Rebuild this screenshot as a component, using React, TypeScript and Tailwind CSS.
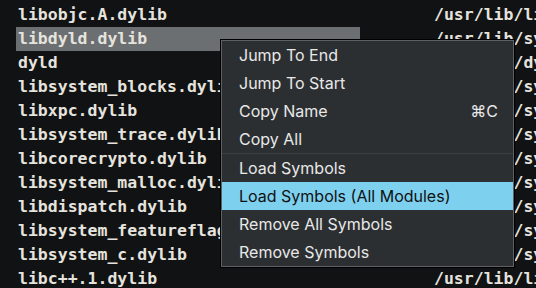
const rows: [string, string][] = [
  ["libobjc.A.dylib", "/usr/lib/libobjc.A.dylib"],
  ["libdyld.dylib", "/usr/lib/system/libdyld.dylib"],
  ["dyld", "/usr/lib/dyld"],
  ["libsystem_blocks.dylib", "/usr/lib/system/libsystem_blocks.dylib"],
  ["libxpc.dylib", "/usr/lib/system/libxpc.dylib"],
  ["libsystem_trace.dylib", "/usr/lib/system/libsystem_trace.dylib"],
  ["libcorecrypto.dylib", "/usr/lib/system/libcorecrypto.dylib"],
  ["libsystem_malloc.dylib", "/usr/lib/system/libsystem_malloc.dylib"],
  ["libdispatch.dylib", "/usr/lib/system/libdispatch.dylib"],
  ["libsystem_featureflags.dylib", "/usr/lib/system/libsystem_featureflags.dylib"],
  ["libsystem_c.dylib", "/usr/lib/system/libsystem_c.dylib"],
  ["libc++.1.dylib", "/usr/lib/libc++.1.dylib"],
]

const menuTop = ["Jump To End", "Jump To Start", "Copy Name", "Copy All"]
const menuBottom = ["Load Symbols", "Load Symbols (All Modules)", "Remove All Symbols", "Remove Symbols"]

function MenuItem({ label, active, shortcut }: { label: string; active?: boolean; shortcut?: string }) {
  return (
    <div
      className={`h-[28px] flex items-center justify-between pl-[17px] pr-[15px] text-[16px] ${
        active ? "bg-[#7ed0ef] text-[#111]" : "text-[#e8e8e8]"
      }`}
    >
      <span>{label}</span>
      {shortcut && <span className="text-[#e8e8e8]">{shortcut}</span>}
    </div>
  )
}

export default function App() {
  return (
    <div className="relative w-[536px] h-[288px] overflow-hidden bg-[#101213]">
      <div className="pt-[3px] font-['DejaVu_Sans_Mono',monospace] font-bold text-[16.5px] text-[#e6e3de] whitespace-nowrap">
        {rows.map(([name, path], i) => (
          <div key={name} className="h-[24px] flex items-center">
            <div
              className={`shrink-0 ml-[16px] w-[344px] h-full flex items-center pl-[2px] overflow-hidden ${
                i === 1 ? "bg-[#6b6f71]" : ""
              }`}
            >
              {name}
            </div>
            <div className="shrink-0 ml-[74px]">{path}</div>
          </div>
        ))}
      </div>

      <div className="absolute left-[220px] top-[39px] w-[295px] bg-black p-px font-['Inter',sans-serif]">
        <div className="border border-[#5e6062] bg-[#2c2f31]">
          {menuTop.map((m) => (
            <MenuItem key={m} label={m} shortcut={m === "Copy Name" ? "⌘C" : undefined} />
          ))}
          <div className="h-px bg-[#3c3f41]" />
          {menuBottom.map((m) => (
            <MenuItem key={m} label={m} active={m === "Load Symbols (All Modules)"} />
          ))}
        </div>
      </div>
    </div>
  )
}
